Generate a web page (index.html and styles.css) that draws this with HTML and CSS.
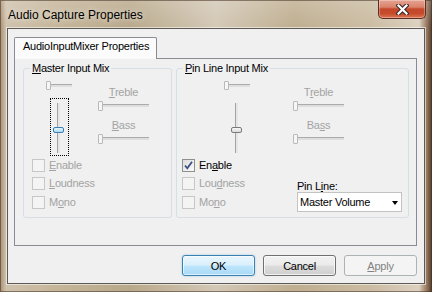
FILE: index.html
```html
<!DOCTYPE html>
<html lang="en">
<head>
  <meta charset="UTF-8">
  <meta name="viewport" content="width=device-width, initial-scale=1.0">
  <title>Audio Capture Properties</title>
  <link rel="stylesheet" href="styles.css">
</head>
<body>
  <div class="window">
    <header class="titlebar">
      <span class="title">Audio Capture Properties</span>
      <span class="close">
        <svg width="13" height="11" viewBox="0 0 13 11">
          <path d="M2.5 1.5 L10.5 9.5 M10.5 1.5 L2.5 9.5" stroke="#3b2b29" stroke-width="4.4" stroke-linecap="square" fill="none"/>
          <path d="M2.5 1.5 L10.5 9.5 M10.5 1.5 L2.5 9.5" stroke="#fff" stroke-width="2.2" stroke-linecap="square" fill="none"/>
        </svg>
      </span>
    </header>

    <main class="client">
      <div class="tabs">
        <div class="tab">AudioInputMixer Properties</div>
      </div>

      <div class="page">
        <fieldset class="group master">
          <legend><u>M</u>aster Input Mix</legend>
          <div class="mixer">
            <div class="vol">
              <div class="hslider short"><span class="thumb"></span></div>
              <div class="focus">
                <div class="vslider"><span class="vthumb"></span></div>
              </div>
            </div>
            <div class="tone">
              <div class="caption"><u>T</u>reble</div>
              <div class="hslider"><span class="thumb"></span></div>
              <div class="caption bass"><u>B</u>ass</div>
              <div class="hslider"><span class="thumb"></span></div>
            </div>
          </div>
          <div class="bottom">
            <div class="checks">
              <div class="check disabled"><span class="box"></span><span><u>E</u>nable</span></div>
              <div class="check disabled"><span class="box"></span><span><u>L</u>oudness</span></div>
              <div class="check disabled"><span class="box"></span><span>M<u>o</u>no</span></div>
            </div>
          </div>
        </fieldset>

        <fieldset class="group pin">
          <legend><u>P</u>in Line Input Mix</legend>
          <div class="mixer">
            <div class="vol">
              <div class="hslider short"><span class="thumb"></span></div>
              <div class="focus">
                <div class="vslider"><span class="vthumb"></span></div>
              </div>
            </div>
            <div class="tone">
              <div class="caption">T<u>r</u>eble</div>
              <div class="hslider"><span class="thumb"></span></div>
              <div class="caption bass">Ba<u>s</u>s</div>
              <div class="hslider"><span class="thumb"></span></div>
            </div>
          </div>
          <div class="bottom">
            <div class="checks">
              <div class="check">
                <span class="box">
                  <svg width="11" height="11" viewBox="0 0 11 11">
                    <path d="M2 5.5 L4.3 8.3 L9 1.8" stroke="#3d4f86" stroke-width="1.8" fill="none"/>
                  </svg>
                </span>
                <span>En<u>a</u>ble</span>
              </div>
              <div class="check disabled"><span class="box"></span><span>Lou<u>d</u>ness</span></div>
              <div class="check disabled"><span class="box"></span><span>Mo<u>n</u>o</span></div>
            </div>
            <div class="pinline">
              <div class="pinlabel">Pin L<u>i</u>ne:</div>
              <div class="dropdown">
                <span>Master Volume</span>
                <span class="arrow"></span>
              </div>
            </div>
          </div>
        </fieldset>
      </div>

      <div class="buttons">
        <button class="btn default">OK</button>
        <button class="btn">Cancel</button>
        <button class="btn" disabled><u>A</u>pply</button>
      </div>
    </main>
  </div>
</body>
</html>
```

FILE: styles.css
```css
* {
  box-sizing: border-box;
}

body {
  margin: 0;
  font-family: "Liberation Sans", Arial, sans-serif;
  font-size: 11px;
  letter-spacing: -0.25px;
  color: #000;
}

u {
  text-decoration: underline;
  text-underline-offset: 1px;
}

.window {
  width: 432px;
  height: 292px;
  padding: 0 7px 8px 7px;
  display: flex;
  flex-direction: column;
  background:
    linear-gradient(to bottom, rgba(255, 255, 255, .18), rgba(255, 255, 255, 0) 28px),
    linear-gradient(to right, #a88e70 0, #cfc2ad 6px, #c4b498 14%, #b9a98b 30%, #d3c8b6 50%, #bfae90 68%, #cbbca3 86%, #dcd0bf 97%, #8d6c52 99%, #4a3a2e 100%);
  box-shadow: inset 0 0 0 1px rgba(70, 50, 35, .55);
}

/* title bar */

.titlebar {
  height: 28px;
  margin: 0 -7px;
  display: flex;
  justify-content: space-between;
  align-items: flex-start;
}

.title {
  margin: 8px 0 0 8px;
  font-size: 12px;
  line-height: 14px;
  letter-spacing: 0;
  text-shadow: 0 0 6px rgba(255, 255, 255, .8);
}

.close {
  width: 48px;
  height: 19px;
  margin-right: 6px;
  display: flex;
  align-items: center;
  justify-content: center;
  padding-top: 1px;
  border: 1px solid #5c2d22;
  border-top: none;
  border-radius: 0 0 5px 5px;
  background: linear-gradient(#e6a391 0%, #d9826b 40%, #c4472a 50%, #c54b2b 75%, #dc7650 100%);
  box-shadow: inset 0 0 0 1px rgba(255, 255, 255, .3);
}

/* client area */

.client {
  flex: 1;
  padding: 8px 0 0 0;
  border: 1px solid #5d5955;
  background: #f0f0f0;
  box-shadow: 0 0 0 1px rgba(255, 255, 255, .55);
  display: flex;
  flex-direction: column;
}

.tabs {
  display: flex;
  margin-left: 6px;
}

.tab {
  position: relative;
  z-index: 1;
  width: 143px;
  height: 22px;
  margin-bottom: -1px;
  padding: 2px 0 0 8px;
  line-height: 13px;
  border: 1px solid #898c95;
  border-bottom: none;
  border-radius: 2px 2px 0 0;
  background: #fbfbfb;
}

.page {
  width: 403px;
  height: 188px;
  margin-left: 6px;
  padding: 3px 6px 0 8px;
  border: 1px solid #898c95;
  background: #f0f0f0;
  display: flex;
  align-items: flex-start;
  gap: 4px;
}

/* group boxes */

.group {
  margin: 0;
  padding: 0;
  min-width: 0;
  height: 156px;
  border: 1px solid #d5dfe5;
  border-radius: 3px;
}

.master {
  width: 149px;
}

.pin {
  width: 233px;
}

legend {
  margin-left: 6px;
  padding: 0 2px;
  height: 13px;
  line-height: 13px;
}

.mixer {
  display: flex;
  align-items: flex-start;
}

.vol {
  width: 26px;
  margin-left: 22px;
}

.pin .vol {
  margin-left: 47px;
}

.tone {
  width: 51px;
  margin-left: 26px;
  color: #a3a3a3;
}

.pin .tone {
  margin-left: 43px;
}

.caption {
  margin-top: 11px;
  line-height: 13px;
  height: 13px;
  text-align: center;
}

.caption.bass {
  margin-top: 8px;
}

/* sliders */

.hslider {
  position: relative;
  height: 10px;
  margin-top: 2px;
}

.hslider.short {
  height: 9px;
  margin-top: 6px;
}

.hslider::before {
  content: "";
  position: absolute;
  left: 1px;
  right: 0;
  top: 3px;
  height: 2px;
  border-top: 1px solid #ababab;
  background: #dedede;
}

.thumb {
  position: absolute;
  left: 0;
  top: 0;
  width: 5px;
  height: 100%;
  border: 1px solid #b9b9b9;
  border-radius: 1px;
  background: #f6f6f6;
}

.focus {
  width: 19px;
  height: 58px;
  margin: 8px 0 0 4px;
  border: 1px dotted #000;
}

.pin .focus {
  border-color: transparent;
}

.vslider {
  position: relative;
  width: 11px;
  height: 50px;
  margin: 4px 0 0 2px;
}

.vslider::before {
  content: "";
  position: absolute;
  left: 4px;
  top: 0;
  bottom: 0;
  width: 2px;
  border-left: 1px solid #a3a3a3;
  background: #e6e6e6;
}

.vthumb {
  position: absolute;
  left: 0;
  top: 24px;
  width: 11px;
  height: 6px;
  border: 1px solid #3c7fb1;
  border-radius: 2px;
  background: linear-gradient(#e5f5fd, #a9d9f4);
}

.pin .vthumb {
  border-color: #7a7a7a;
  background: linear-gradient(#f7f7f7, #d9d9d9);
}

/* checkboxes */

.bottom {
  display: flex;
  align-items: flex-start;
  margin-top: 3px;
}

.checks {
  margin-left: 8px;
}

.pin .checks {
  margin-left: 5px;
}

.check {
  display: flex;
  align-items: center;
  gap: 4px;
  height: 13px;
  line-height: 13px;
}

.check + .check {
  margin-top: 5px;
}

.check:last-child {
  margin-top: 6px;
}

.box {
  width: 13px;
  height: 13px;
  border: 1px solid #8f8f8f;
  background: linear-gradient(135deg, #dcdcdc, #fbfbfb);
  display: flex;
  align-items: center;
  justify-content: center;
}

.check.disabled {
  color: #a3a3a3;
}

.check.disabled .box {
  border-color: #c7c7c7;
  background: #f4f4f4;
}

/* pin line combo */

.pinline {
  margin: 21px 6px 0 auto;
}

.pinlabel {
  height: 12px;
  line-height: 12px;
}

.dropdown {
  width: 105px;
  height: 20px;
  padding: 0 3px 0 2px;
  border: 1px solid #c3c3c3;
  background: #fff;
  display: flex;
  align-items: center;
  justify-content: space-between;
}

.arrow {
  width: 0;
  height: 0;
  margin-top: 2px;
  border-left: 3.5px solid transparent;
  border-right: 3.5px solid transparent;
  border-top: 4px solid #000;
}

/* buttons */

.buttons {
  display: flex;
  justify-content: flex-end;
  gap: 8px;
  margin: 9px 7px 0 0;
}

.btn {
  width: 73px;
  height: 21px;
  padding: 0;
  font: inherit;
  letter-spacing: -0.25px;
  color: #000;
  border: 1px solid #707070;
  border-radius: 3px;
  background: linear-gradient(#f2f2f2 0%, #ebebeb 48%, #dddddd 52%, #cfcfcf 100%);
  box-shadow: inset 0 0 0 1px rgba(255, 255, 255, .7);
}

.btn.default {
  border-color: #3c7fb1;
  background: linear-gradient(#eaf6fd 0%, #d9f0fc 48%, #bee6fd 52%, #a7d9f5 100%);
  box-shadow: inset 0 0 0 1px rgba(255, 255, 255, .6), 0 0 2px rgba(60, 160, 230, .5);
}

.btn:disabled {
  color: #838383;
  border-color: #adb2b5;
  background: #f4f4f4;
  box-shadow: none;
}
```
